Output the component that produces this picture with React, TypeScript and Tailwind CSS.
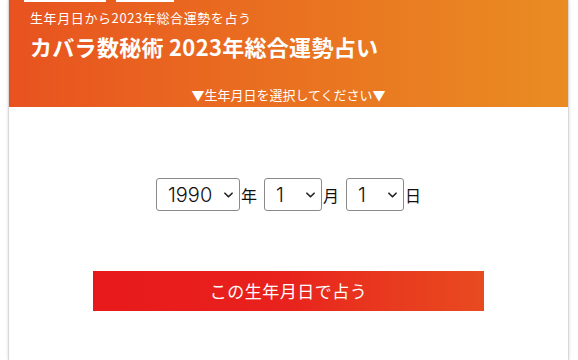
import { useState } from "react";

const font = { fontFamily: '"Noto Sans CJK JP", "Noto Sans", sans-serif' };
const numFont = { fontFamily: 'Inter, "Noto Sans CJK JP", sans-serif' };

function Chevron() {
  return (
    <svg
      viewBox="0 0 10 6"
      className="pointer-events-none absolute right-[7px] top-1/2 h-[6px] w-[9px] -translate-y-1/2"
    >
      <path d="M1 1l4 4 4-4" fill="none" stroke="#222" strokeWidth="1.8" strokeLinecap="round" strokeLinejoin="round" />
    </svg>
  );
}

function DateSelect({
  value,
  options,
  onChange,
  width,
}: {
  value: number;
  options: number[];
  onChange: (v: number) => void;
  width: string;
}) {
  return (
    <div className={`relative ${width}`}>
      <select
        value={value}
        onChange={(e) => onChange(Number(e.target.value))}
        className="h-[33px] w-full appearance-none rounded-[3px] border border-[#8a8a8a] bg-white pl-[11px] text-[20px] font-light leading-none text-[#111]"
        style={numFont}
      >
        {options.map((o) => (
          <option key={o} value={o}>
            {o}
          </option>
        ))}
      </select>
      <Chevron />
    </div>
  );
}

const years = Array.from({ length: 80 }, (_, i) => 1940 + i);
const months = Array.from({ length: 12 }, (_, i) => i + 1);
const days = Array.from({ length: 31 }, (_, i) => i + 1);

export default function App() {
  const [year, setYear] = useState(1990);
  const [month, setMonth] = useState(1);
  const [day, setDay] = useState(1);

  return (
    <div className="min-h-[360px] bg-white" style={font}>
      <div className="ml-[8px] w-[561px] border-x border-[#d8d8d8] shadow-[0_0_3px_rgba(0,0,0,0.15)]">
        <header className="relative h-[107px] bg-gradient-to-r from-[#e8521f] to-[#e98c22] px-[21px] pt-[8px] text-white">
          <div className="absolute left-[15px] top-0 h-[2px] w-[82px] bg-white" />
          <div className="absolute left-[107px] top-0 h-[2px] w-[58px] bg-white" />
          <p className="text-[13px] leading-[20px] tracking-[0.6px]">生年月日から2023年総合運勢を占う</p>
          <h1 className="mt-[3px] text-[22px] font-bold leading-[30px] tracking-[0.3px]">カバラ数秘術 2023年総合運勢占い</h1>
          <p className="mt-[24px] text-center text-[13px] leading-[20px]">▼生年月日を選択してください▼</p>
        </header>
        <main className="h-[253px] bg-white pt-[71px]">
          <div className="flex items-center justify-center text-[16px] text-[#111]">
            <DateSelect value={year} options={years} onChange={setYear} width="w-[84px]" />
            <span className="ml-[1px] mr-[7px]">年</span>
            <DateSelect value={month} options={months} onChange={setMonth} width="w-[58px]" />
            <span className="ml-[1px] mr-[7px]">月</span>
            <DateSelect value={day} options={days} onChange={setDay} width="w-[58px]" />
            <span className="ml-[1px]">日</span>
          </div>
          <div className="mt-[60px] flex justify-center">
            <button className="h-[40px] w-[391px] bg-gradient-to-r from-[#e8191b] via-[#e8221d] to-[#e84a20] text-[17px] tracking-[0.5px] text-white">
              この生年月日で占う
            </button>
          </div>
        </main>
      </div>
    </div>
  );
}
